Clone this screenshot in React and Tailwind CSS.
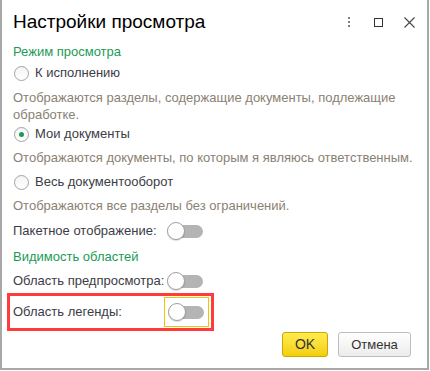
import React from "react";

function Radio({ checked, label }) {
  return (
    <div className="flex h-[22px] items-center">
      <div className="ml-[1px] flex h-[15px] w-[15px] items-center justify-center rounded-full border border-[#a3a3a3] bg-gradient-to-b from-[#f4f4f4] to-white">
        {checked && <div className="h-[5px] w-[5px] rounded-full bg-[#1a9b55]" />}
      </div>
      <span className="ml-[6px] text-[13px] text-[#3c3c46]">{label}</span>
    </div>
  );
}

function Toggle() {
  return (
    <div className="relative h-[18px] w-[36px]">
      <div className="absolute left-[8px] right-0 top-[3px] h-[13px] rounded-full bg-[#b4b4b4]" />
      <div className="absolute left-0 top-0 h-[18px] w-[18px] rounded-full border border-[#a0a0a0] bg-white shadow-[0_1px_1px_rgba(0,0,0,0.15)]" />
    </div>
  );
}

export default function App() {
  return (
    <div className="h-[371px] w-[430px] bg-white" style={{ fontFamily: '"Liberation Sans", Arial, sans-serif' }}>
      <div className="flex h-[370px] w-[429px] flex-col border-x-2 border-b-2 border-[#a8a8a8] bg-white">
        <div className="flex h-[44px] items-center pl-[11px] pr-[12px]">
          <div className="flex-1 text-[19px] text-black">Настройки просмотра</div>
          <div className="flex items-center">
            <div className="flex w-[10px] flex-col items-center gap-[2px]">
              <div className="h-[2px] w-[2px] bg-[#808080]" />
              <div className="h-[2px] w-[2px] bg-[#808080]" />
              <div className="h-[2px] w-[2px] bg-[#808080]" />
            </div>
            <div className="ml-[20px] h-[9px] w-[9px] border-[1.5px] border-[#333]" />
            <svg className="ml-[21px]" width="11" height="11" viewBox="0 0 11 11">
              <path d="M0.5 0.5 L10.5 10.5 M10.5 0.5 L0.5 10.5" stroke="#444" strokeWidth="1.1" />
            </svg>
          </div>
        </div>
        <div className="px-[11px]">
          <div className="h-[16px] text-[13px] leading-[16px] text-[#1a9b55]">Режим просмотра</div>
          <div className="mt-[2px]">
            <Radio label="К исполнению" />
          </div>
          <p className="mt-[5px] text-[13px] leading-[17px] text-[#8b8173]">
            Отображаются разделы, содержащие документы, подлежащие
            <br />
            обработке.
          </p>
          <Radio checked label="Мои документы" />
          <p className="mt-[4px] text-[13px] leading-[17px] text-[#8b8173]">
            Отображаются документы, по которым я являюсь ответственным.
          </p>
          <div className="mt-[5px]">
            <Radio label="Весь документооборот" />
          </div>
          <p className="mt-[4px] text-[13px] leading-[17px] text-[#8b8173]">
            Отображаются все разделы без ограничений.
          </p>
          <div className="mt-[6px] flex h-[22px] items-center">
            <span className="w-[154px] text-[13px] text-[#3c3c46]">Пакетное отображение:</span>
            <Toggle />
          </div>
          <div className="mt-[5px] h-[20px] text-[13px] leading-[20px] text-[#1a9b55]">Видимость областей</div>
          <div className="mt-[3px] flex h-[22px] items-center">
            <span className="w-[154px] text-[13px] text-[#3c3c46]">Область предпросмотра:</span>
            <Toggle />
          </div>
          <div className="-ml-[6px] mt-[1px] flex h-[38px] w-[207px] items-center border-[3px] border-[#ff3b3b] pl-[3px]">
            <span className="w-[151px] text-[13px] text-[#3c3c46]">Область легенды:</span>
            <div className="flex h-[30px] items-center border border-[#f5c400] pl-[3px] pr-[4px]">
              <Toggle />
            </div>
          </div>
          <div className="mt-[1px] flex justify-end gap-[10px] pr-[5px]">
            <button className="h-[25px] w-[46px] rounded-[3px] border border-[#c9a800] bg-gradient-to-b from-[#ffec4d] to-[#f3cf00] text-[14px] text-[#333]">
              OK
            </button>
            <button className="h-[25px] w-[73px] rounded-[3px] border border-[#bdbdbd] bg-gradient-to-b from-white to-[#ececec] text-[13px] text-[#333]">
              Отмена
            </button>
          </div>
        </div>
      </div>
    </div>
  );
}
